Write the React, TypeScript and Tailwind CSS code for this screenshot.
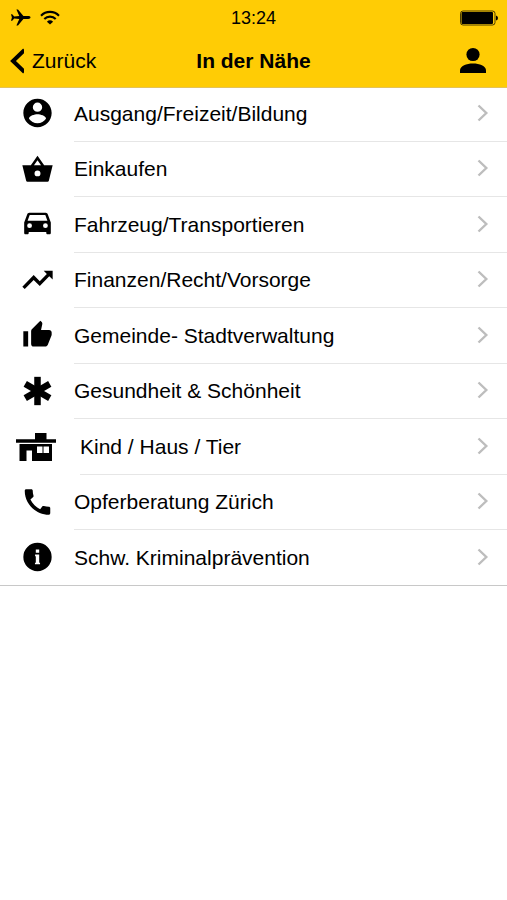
import type { ReactNode } from 'react';

interface Category {
  label: string;
  icon: ReactNode;
  wide?: boolean; // wide icons push the label a little to the right
}

const categories: Category[] = [
  {
    label: 'Ausgang/Freizeit/Bildung',
    icon: (
      <path d="M12 2C6.48 2 2 6.48 2 12s4.48 10 10 10 10-4.48 10-10S17.52 2 12 2zm0 2.6a3.3 3.3 0 1 1 0 6.6 3.3 3.3 0 0 1 0-6.6zm0 14.6c-2.5 0-4.71-1.28-6-3.22.03-1.99 4-3.08 6-3.08 1.99 0 5.97 1.09 6 3.08-1.29 1.94-3.5 3.22-6 3.22z" />
    ),
  },
  {
    label: 'Einkaufen',
    icon: (
      <path
        fillRule="evenodd"
        d="M12 2.6 7.3 9.4H1.3L4 20.3q.2.7.9.7h14.2q.7 0 .9-.7L22.7 9.4h-6L12 2.6zm0 3.2 2.5 3.6h-5L12 5.8zM12 13a2.1 2.1 0 1 1 0 4.2 2.1 2.1 0 0 1 0-4.2z"
      />
    ),
  },
  {
    label: 'Fahrzeug/Transportieren',
    icon: (
      <path
        fillRule="evenodd"
        d="M19.300 5.300C19.100 4.600 18.500 4.100 17.800 4.100H6.200c-.7 0-1.300.5-1.500 1.200L2.600 11v7.300c0 .5.4.9.9.9h1.400c.5 0 .9-.4.9-.9v-.7h12.400v.7c0 .5.400.9.9.9h1.400c.5 0 .9-.4.9-.9V11l-2.100-5.700zM6.400 14.900a1.700 1.700 0 1 1 0-3.400 1.700 1.700 0 0 1 0 3.400zm11.200 0a1.700 1.700 0 1 1 0-3.400 1.700 1.700 0 0 1 0 3.400zM5 9.700l1.500-4h11L19 9.700H5z"
      />
    ),
  },
  {
    label: 'Finanzen/Recht/Vorsorge',
    icon: <path d="m16.400 5.500 2.200 2.200-5 5.100-4.300-4.300L1.300 16.700l1.700 1.700 6.300-6.400 4.300 4.300 6.700-6.900 2.400 2.300V5.500h-6.300z" />,
  },
  {
    label: 'Gemeinde- Stadtverwaltung',
    icon: (
      <path d="M2 20.2h3.4V9.4H2v10.8zM22 10.3c0-1.1-.8-1.900-1.800-1.900h-5.700l.9-4.200v-.3c0-.4-.2-.7-.4-1l-1-1-6 6.100c-.3.4-.5.8-.5 1.300v9c0 1 .8 1.900 1.800 1.900h8.200c.8 0 1.400-.5 1.700-1.100l2.600-6.500c.1-.2.2-.4.2-.7v-1.600z" />
    ),
  },
  {
    label: 'Gesundheit & Schönheit',
    icon: (
      <g>
        <rect x="9.700" y="2" width="4.600" height="20" />
        <rect x="9.700" y="2" width="4.600" height="20" transform="rotate(60 12 12)" />
        <rect x="9.700" y="2" width="4.600" height="20" transform="rotate(120 12 12)" />
      </g>
    ),
  },
  {
    label: 'Kind / Haus / Tier',
    wide: true,
    icon: (
      <path
        fillRule="evenodd"
        d="M19 0h11.500v6.200H40v3.600H0V6.200h19V0zM3.500 11h32.500v17H16V17.500h-5.500V28h-7V11zm17.500 2.500V20h5.500v-6.500H21zm6.500 0V20H33v-6.500h-5.500z"
      />
    ),
  },
  {
    label: 'Opferberatung Zürich',
    icon: (
      <path d="M20.010 15.380c-1.230 0-2.420-.2-3.530-.560-.350-.120-.740-.030-1.010.240l-1.570 1.970c-2.830-1.350-5.480-3.900-6.890-6.830l1.950-1.660c.270-.280.350-.670.240-1.020-.370-1.110-.560-2.300-.560-3.530 0-.540-.450-.990-.990-.990H4.190C3.650 3 3 3.240 3 3.990 3 13.280 10.730 21 20.010 21c.710 0 .990-.630.990-1.180v-3.450c0-.540-.450-.990-.990-.990z" />
    ),
  },
  {
    label: 'Schw. Kriminalprävention',
    icon: (
      <path
        fillRule="evenodd"
        d="M12 2a10 10 0 1 0 0 20 10 10 0 0 0 0-20zm-1.200 4.700h2.400v2.300h-2.400V6.700zm-.5 3.600h2.900v5.700h.6V17.200h-3.600v-1.200h.6v-4.500h-.5v-1.200z"
      />
    ),
  },
];

function StatusBar() {
  return (
    <div className="grid grid-cols-3 items-center h-9 px-2">
      <div className="flex items-center gap-2">
        <svg viewBox="0 0 24 20" className="w-6 h-5" aria-label="Flugmodus">
          <path d="M22.500 9.500c0-.8-.9-1.400-2.200-1.400h-4.900L10 1.500H8.400l2.900 6.600-5.100.4-2-2.200H3l.9 3.200-.9 3.200h1.200l2-2.200 5.100.4-2.900 6.600H10l5.400-6.600h4.900c1.300 0 2.200-.6 2.200-1.400z" />
        </svg>
        <svg viewBox="0 0 20 15" className="w-5 h-4" aria-label="WLAN">
          <g fill="none" stroke="black" strokeWidth="2.100">
            <path d="M1 5.200a12.600 12.600 0 0 1 18 0" />
            <path d="M4.300 8.500a8 8 0 0 1 11.400 0" />
          </g>
          <path d="M10 14 6.900 11.300a4.500 4.500 0 0 1 6.200 0z" />
        </svg>
      </div>
      <time className="text-[18px] leading-6 text-center">13:24</time>
      <svg viewBox="0 0 39 16" className="w-10 h-4 justify-self-end" aria-label="Akku">
        <rect x="1" y="1" width="34.500" height="14" rx="2.500" fill="none" stroke="black" strokeOpacity=".7" strokeWidth="1" />
        <rect x="2" y="2" width="31.500" height="12" rx="1" />
        <path d="M36.500 5.500q2 .5 2 2.500t-2 2.500z" />
      </svg>
    </div>
  );
}

function Header() {
  return (
    <header className="relative z-10 bg-[#ffcc05] border-b border-[#e3c25a]">
      <StatusBar />
      <div className="grid grid-cols-3 items-center h-[51px] px-2 pb-0.5">
        <button type="button" className="flex items-center gap-2 text-[21px] leading-6">
          <svg viewBox="0 0 16 26" className="w-4 h-[26px]" aria-hidden="true">
            <path d="M16.500 2 5 13l11.500 11" fill="none" stroke="black" strokeWidth="4" />
          </svg>
          Zurück
        </button>
        <h1 className="text-[21px] leading-6 font-bold text-center whitespace-nowrap">In der Nähe</h1>
        <button type="button" className="justify-self-end mr-3" aria-label="Profil">
          <svg viewBox="0 0 28 28" className="w-7 h-7">
            <circle cx="14" cy="7.500" r="6.600" />
            <path d="M1 26v-2.500C1 19 7.500 16.600 14 16.600S27 19 27 23.500V26z" />
          </svg>
        </button>
      </div>
    </header>
  );
}

function CategoryRow({ label, icon, wide }: Category) {
  return (
    <li className="group odd:h-14 even:h-[55px] last:border-b last:border-[#c8c8c8]">
      <a href="#" className="flex h-full">
        {wide ? (
          <span className="flex items-center w-20 pl-4 shrink-0">
            <svg viewBox="0 0 40 28" className="w-10 h-7" aria-hidden="true">{icon}</svg>
          </span>
        ) : (
          <span className="flex items-center w-[74px] pl-5 pb-0.5 shrink-0">
            <svg viewBox="0 0 24 24" className="w-[35px] h-[34px]" aria-hidden="true">{icon}</svg>
          </span>
        )}
        <span className="flex flex-1 items-center justify-between pr-[18px] border-b border-[#e6e6e6] group-last:border-b-0">
          <span className="text-[21px] leading-6">{label}</span>
          <svg viewBox="0 0 12 18" className="w-3 h-[18px] mb-0.5" aria-hidden="true">
            <path d="m1.500 1.500 7.800 7.500-7.800 7.500" fill="none" stroke="#bdbdbd" strokeWidth="2.400" />
          </svg>
        </span>
      </a>
    </li>
  );
}

export default function App() {
  return (
    <div className="min-h-screen bg-white text-black font-['Liberation_Sans',Arial,sans-serif]">
      <Header />
      {/* the list starts slightly under the header */}
      <ul className="-mt-0.5">
        {categories.map((category) => (
          <CategoryRow key={category.label} {...category} />
        ))}
      </ul>
    </div>
  );
}
